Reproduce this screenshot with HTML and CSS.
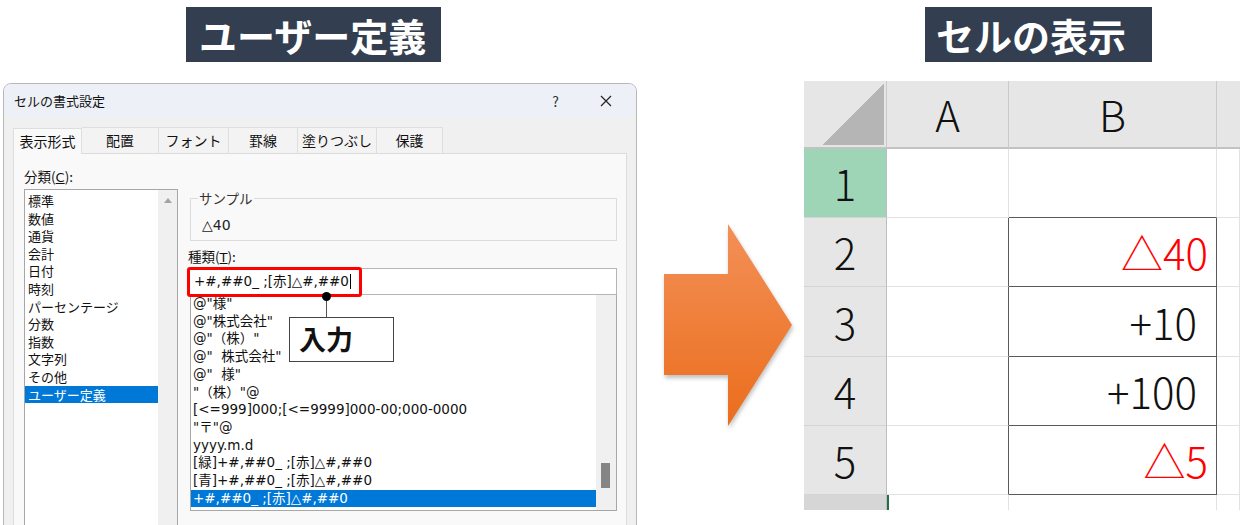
FILE: index.html
```html
<!DOCTYPE html>
<html lang="ja">
<head>
  <meta charset="UTF-8">
  <title>ユーザー定義とセルの表示</title>
  <link rel="stylesheet" href="styles.css">
</head>
<body>

<div class="page">

  <!-- 左側：書式設定ダイアログ -->
  <section class="left">
    <div class="heading heading-left">ユーザー定義</div>

    <div class="dialog">
      <div class="titlebar">
        <span class="dlg-title">セルの書式設定</span>
        <span class="help">?</span>
        <svg class="close" width="12" height="12" viewBox="0 0 12 12">
          <path d="M1 1 L11 11 M11 1 L1 11" stroke="#222" stroke-width="1.2" fill="none"/>
        </svg>
      </div>

      <div class="dlg-body">
        <div class="tabs">
          <div class="tab active tab-1">表示形式</div>
          <div class="tab tab-2">配置</div>
          <div class="tab tab-3">フォント</div>
          <div class="tab tab-4">罫線</div>
          <div class="tab tab-5">塗りつぶし</div>
          <div class="tab tab-6">保護</div>
        </div>

        <div class="panel">
          <div class="label">分類(<u>C</u>):</div>

          <div class="panel-cols">
            <div class="cat-list">
              <ul class="items">
                <li>標準</li>
                <li>数値</li>
                <li>通貨</li>
                <li>会計</li>
                <li>日付</li>
                <li>時刻</li>
                <li>パーセンテージ</li>
                <li>分数</li>
                <li>指数</li>
                <li>文字列</li>
                <li>その他</li>
                <li class="selected">ユーザー定義</li>
              </ul>
              <div class="vscroll"><span class="up-arrow"></span></div>
            </div>

            <div class="format-side">
              <fieldset class="sample">
                <legend>サンプル</legend>
                <div class="sample-val">△40</div>
              </fieldset>

              <div class="label label-type">種類(<u>T</u>):</div>
              <div class="type-input">+#,##0_ ;[赤]△#,##0<span class="caret"></span></div>

              <div class="type-list">
                <ul class="items">
                  <li>@"様"</li>
                  <li>@"株式会社"</li>
                  <li>@"（株）"</li>
                  <li>@"&nbsp; 株式会社"</li>
                  <li>@"&nbsp; 様"</li>
                  <li>"（株）"@</li>
                  <li>[&lt;=999]000;[&lt;=9999]000-00;000-0000</li>
                  <li>"〒"@</li>
                  <li>yyyy.m.d</li>
                  <li>[緑]+#,##0_ ;[赤]△#,##0</li>
                  <li>[青]+#,##0_ ;[赤]△#,##0</li>
                  <li class="selected">+#,##0_ ;[赤]△#,##0</li>
                </ul>
                <div class="vscroll"><span class="thumb"></span></div>
              </div>

              <!-- 注釈 -->
              <div class="mark"></div>
              <div class="pin"></div>
              <div class="note">入力</div>
            </div>
          </div>
        </div>
      </div>
    </div>
  </section>

  <!-- 矢印 -->
  <div class="arrow-col">
    <svg class="arrow" width="128" height="202" viewBox="0 0 128 202">
      <defs>
        <linearGradient id="arrowGrad" x1="0" y1="0" x2="0" y2="1">
          <stop offset="0" stop-color="#f39057"/>
          <stop offset="1" stop-color="#eb6d1c"/>
        </linearGradient>
      </defs>
      <polygon points="0,50 64,50 64,0 128,101 64,202 64,151 0,151" fill="url(#arrowGrad)"/>
    </svg>
  </div>

  <!-- 右側：Excelのセル -->
  <section class="right">
    <div class="heading heading-right">セルの表示</div>

    <div class="sheet">
      <div class="hd corner"><span class="corner-tri"></span></div>
      <div class="hd col">A</div>
      <div class="hd col">B</div>
      <div class="hd col col-c"></div>

      <div class="rh active-row">1</div>
      <div class="cell"></div>
      <div class="cell b-top"></div>
      <div class="cell"></div>

      <div class="rh">2</div>
      <div class="cell a-edge"></div>
      <div class="cell val neg">△40</div>
      <div class="cell"></div>

      <div class="rh">3</div>
      <div class="cell a-edge"></div>
      <div class="cell val pos">+10</div>
      <div class="cell"></div>

      <div class="rh">4</div>
      <div class="cell a-edge"></div>
      <div class="cell val pos">+100</div>
      <div class="cell"></div>

      <div class="rh">5</div>
      <div class="cell a-edge"></div>
      <div class="cell val neg">△5</div>
      <div class="cell"></div>

      <div class="rh rh-tail"></div>
      <div class="cell tail-a"></div>
      <div class="cell tail"></div>
      <div class="cell tail"></div>
    </div>
  </section>

</div>

</body>
</html>
```

FILE: styles.css
```css
body {
  margin: 0;
  background-color: #fff;
  font-family: "DejaVu Sans", "Noto Sans CJK JP", sans-serif;
  color: #111;
}

.page {
  display: flex;
  width: 1240px;
  height: 525px;
  overflow: hidden;
}

/* 見出し */
.heading {
  box-sizing: border-box;
  height: 55px;
  margin-top: 7px;
  background-color: #333f50;
  color: #fff;
  font-family: "Noto Sans CJK JP", sans-serif;
  font-weight: 700;
  font-size: 38px;
  line-height: 55px;
  white-space: nowrap;
}

.heading-left {
  width: 255px;
  margin-left: 186px;
  padding-left: 13px;
}

.heading-right {
  width: 227px;
  margin-left: 121px;
  padding-left: 11px;
}

/* 左側 */
.left {
  width: 640px;
  flex-shrink: 0;
}

.dialog {
  box-sizing: border-box;
  width: 634px;
  height: 470px;
  margin: 21px 0 0 3px;
  border: 1px solid #b8b8b8;
  border-radius: 8px 8px 0 0;
  background-color: #f0f0f0;
  overflow: hidden;
}

.titlebar {
  display: flex;
  align-items: center;
  height: 33px;
  padding-left: 10px;
  background-color: #edf1f7;
  font-size: 13px;
}

.dlg-title {
  font-family: "Noto Sans CJK JP", sans-serif;
  flex: 1;
}

.help {
  font-family: "Noto Sans CJK JP", sans-serif;
  font-size: 14px;
  color: #333;
  margin-right: 41px;
}

.close {
  margin-right: 24px;
}

.dlg-body {
  padding: 10px 0 0 9px;
}

.tabs {
  display: flex;
  height: 26px;
}

.tab {
  box-sizing: border-box;
  height: 26px;
  border: 1px solid #dedede;
  border-bottom: none;
  border-left: none;
  background-color: #f3f3f3;
  font-family: "Noto Sans CJK JP", sans-serif;
  font-size: 14px;
  line-height: 25px;
  text-align: center;
}

.tab.active {
  border-left: 1px solid #dedede;
  background-color: #f9f9f9;
  position: relative;
  top: 1px;
}

.tab-1 { width: 69px; }
.tab-2 { width: 77px; }
.tab-3 { width: 70px; }
.tab-4 { width: 69px; }
.tab-5 { width: 79px; }
.tab-6 { width: 66px; }

.panel {
  box-sizing: border-box;
  width: 614px;
  height: 420px;
  padding: 13px 0 0 10px;
  border: 1px solid #dcdcdc;
  background-color: #f9f9f9;
}

.label {
  height: 18px;
  font-size: 13.5px;
  line-height: 18px;
  font-family: "Noto Sans CJK JP", sans-serif;
}

.label u {
  font-family: "DejaVu Sans", sans-serif;
  font-size: 13px;
}

.panel-cols {
  display: flex;
  gap: 10px;
  margin-top: 4px;
}

.items {
  list-style: none;
  margin: 0;
  padding: 0;
  flex: 1;
  font-size: 13.5px;
  line-height: 17.7px;
  white-space: nowrap;
}

.items li {
  padding-left: 3px;
}

.items li.selected {
  background-color: #0078d7;
  color: #fff;
}

.vscroll {
  position: relative;
  width: 19px;
  background-color: #f0f0f0;
}

/* 分類リスト */
.cat-list {
  box-sizing: border-box;
  display: flex;
  width: 154px;
  height: 360px;
  padding-top: 2px;
  border: 1px solid #a7a7a7;
  background-color: #fff;
}

.cat-list .vscroll {
  margin-top: -2px;
}

.cat-list .items li {
  font-family: "Noto Sans CJK JP", sans-serif;
  font-size: 13px;
  line-height: 17.6px;
}

.up-arrow {
  position: absolute;
  left: 6px;
  top: 8px;
  width: 0;
  height: 0;
  border-left: 4px solid transparent;
  border-right: 4px solid transparent;
  border-bottom: 5px solid #a3a3a3;
}

/* 右側の設定 */
.format-side {
  position: relative;
  width: 429px;
}

.sample {
  margin: 0 0 0 2px;
  padding: 0 6px 6px 7px;
  border: 1px solid #dcdcdc;
  min-width: 0;
}

.sample legend {
  padding: 0 1px;
  font-family: "Noto Sans CJK JP", sans-serif;
  font-size: 13.5px;
  line-height: 18px;
  color: #333;
}

.sample-val {
  margin: 9px 0 0 4px;
  font-size: 14px;
  line-height: 18px;
  color: #222;
}

.label-type {
  margin-top: 6px;
}

.type-input {
  box-sizing: border-box;
  height: 27px;
  margin-top: 3px;
  padding-left: 5px;
  border: 1px solid #b5b5b5;
  background-color: #fff;
  font-size: 13.5px;
  line-height: 25px;
  white-space: nowrap;
}

.caret {
  display: inline-block;
  width: 1px;
  height: 15px;
  margin-left: 1px;
  vertical-align: -3px;
  background-color: #000;
}

.type-list {
  box-sizing: border-box;
  display: flex;
  height: 216px;
  margin-left: 2px;
  border: 1px solid #a7a7a7;
  border-top: none;
  background-color: #fff;
}

.type-list .items li {
  padding-left: 2px;
}

.type-list .vscroll {
  width: 20px;
}

.thumb {
  position: absolute;
  left: 5px;
  top: 168px;
  width: 9px;
  height: 25px;
  background-color: #858585;
}

/* 注釈 */
.mark {
  position: absolute;
  left: -1px;
  top: 78px;
  box-sizing: border-box;
  width: 175px;
  height: 30px;
  border: 3px solid #ff0000;
  border-radius: 3px;
}

.pin {
  position: absolute;
  left: 138px;
  top: 107px;
  width: 1px;
  height: 21px;
  background-color: #555;
}

.pin::before {
  content: "";
  position: absolute;
  left: -4px;
  top: -4px;
  width: 9px;
  height: 9px;
  border-radius: 50%;
  background-color: #000;
}

.note {
  position: absolute;
  left: 101px;
  top: 128px;
  box-sizing: border-box;
  width: 105px;
  height: 45px;
  padding-left: 9px;
  border: 1px solid #444;
  background-color: #fff;
  font-family: "Noto Sans CJK JP", sans-serif;
  font-weight: 700;
  font-size: 27px;
  line-height: 42px;
}

/* 矢印 */
.arrow-col {
  width: 164px;
  flex-shrink: 0;
}

.arrow {
  display: block;
  margin: 224px 0 0 24px;
  filter: drop-shadow(1px 3px 2px rgba(0, 0, 0, 0.25));
}

/* Excel */
.right {
  width: 436px;
  flex-shrink: 0;
}

.sheet {
  display: grid;
  grid-template-columns: 83px 122px 208px 23px;
  grid-template-rows: 68px 69px 69px 70px 69px 69px 15px;
  margin-top: 19px;
  font-family: "Noto Sans CJK JP", sans-serif;
  font-weight: 300;
  font-size: 42px;
  color: #111;
}

.sheet > div {
  box-sizing: border-box;
  display: flex;
  align-items: center;
  justify-content: center;
  line-height: 1;
}

.hd {
  background-color: #e6e6e6;
  border-right: 1px solid #cacaca;
  border-bottom: 2px solid #c2c2c2;
}

.col-c {
  border-right: none;
}

.corner {
  justify-content: flex-end !important;
  align-items: flex-end !important;
  padding: 0 2px 2px 0;
}

.corner-tri {
  width: 62px;
  height: 61px;
  background: linear-gradient(to bottom right, transparent 50%, #b5b5b5 50%);
}

.rh {
  background-color: #e6e6e6;
  border-right: 1px solid #bdbdbd;
  border-bottom: 1px solid #d4d4d4;
}

.rh.active-row {
  background-color: #9fd5b7;
}

.rh-tail {
  background-color: #d6d6d6;
  border-bottom: none;
}

.cell {
  background-color: #fff;
  border-right: 1px solid #e2e2e2;
  border-bottom: 1px solid #e2e2e2;
}

.cell.b-top {
  border-bottom: 1px solid #5a5a5a;
}

.cell.a-edge {
  border-right: 1px solid #5a5a5a;
}

.cell.val {
  justify-content: flex-end;
  border-right: 1px solid #5a5a5a;
  border-bottom: 1px solid #5a5a5a;
}

.cell.neg {
  color: #ff0000;
  padding-right: 8px;
}

.cell.pos {
  padding-right: 19px;
}

.cell.tail {
  border-bottom: none;
}

.cell.tail-a {
  border-bottom: none;
  border-left: 2px solid #217346;
}
```
